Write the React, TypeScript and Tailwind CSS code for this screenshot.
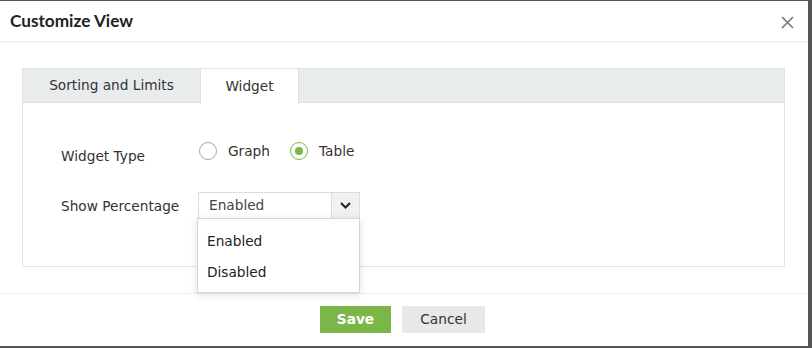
import * as React from 'react';

const body = { fontFamily: '"DejaVu Sans", Verdana, sans-serif' };

const Radio: React.FC<{ checked?: boolean; label: string }> = ({ checked, label }) => (
    <label className="flex items-center gap-[11px]">
        <span className={`w-[18px] h-[18px] rounded-full border-[1.5px] flex items-center justify-center ${checked ? 'border-[#7ab648]' : 'border-[#a8a8a8]'}`}>
            {checked && <span className="w-[8px] h-[8px] rounded-full bg-[#7ab648]" />}
        </span>
        <span className="text-[13.7px] text-[#333]">{label}</span>
    </label>
);

export default function App() {
    return (
        <div className="w-[812px] h-[348px] bg-[#555] overflow-hidden" style={body}>
            <div className="w-[808px] h-[345px] mt-[1px] bg-white flex flex-col">
                {/* header */}
                <div className="h-[42px] flex items-center justify-between pl-[10px] pr-[14px] border-b-2 border-[#f1f1f1]">
                    <h1 className="text-[17.2px] font-bold text-[#222]" style={{ fontFamily: 'Lato, sans-serif' }}>Customize View</h1>
                    <svg width="13" height="13" viewBox="0 0 13 13" className="mt-[2px]">
                        <path d="M1 1L12 12M12 1L1 12" stroke="#777" strokeWidth="1.6" />
                    </svg>
                </div>

                {/* body */}
                <div className="flex-1 pt-[25px] px-[22px]">
                    <div className="w-[763px] h-[199px] border border-[#e2e4e4] flex flex-col">
                        <div className="h-[34px] bg-[#e9ecec] border-b border-[#dfe2e2] flex">
                            <div className="w-[177px] flex items-center justify-center text-[13.7px] text-[#333]">Sorting and Limits</div>
                            <div className="w-[99px] h-[35px] bg-white border-x border-[#dfe2e2] flex items-center justify-center text-[13.7px] text-[#333]">Widget</div>
                        </div>
                        <div className="pl-[38px] pt-[35px] flex flex-col gap-[28px]">
                            <div className="flex items-center h-[26px]">
                                <span className="w-[138px] text-[13.7px] text-[#333] mt-[10px]">Widget Type</span>
                                <div className="flex items-center gap-[20px]">
                                    <Radio label="Graph" />
                                    <Radio checked label="Table" />
                                </div>
                            </div>
                            <div className="flex items-center">
                                <span className="w-[137px] text-[13.7px] text-[#333] mt-[1px]">Show Percentage</span>
                                <div className="relative">
                                    <div className="w-[162px] h-[27px] border border-[#dcdcdc] flex">
                                        <span className="flex-1 pl-[10px] flex items-center text-[13.7px] text-[#444]">Enabled</span>
                                        <span className="w-[28px] bg-[#f1f1f1] border-l border-[#dcdcdc] flex items-center justify-center">
                                            <svg width="11" height="7" viewBox="0 0 11 7">
                                                <path d="M1 1L5.5 5.5L10 1" stroke="#222" strokeWidth="2" fill="none" />
                                            </svg>
                                        </span>
                                    </div>
                                    <div className="absolute left-[-1px] top-[26px] w-[163px] h-[75px] bg-white border border-[#d6d6d6] shadow-[0_2px_8px_rgba(0,0,0,0.12)] pt-[12px] flex flex-col gap-[10px] z-10">
                                        <span className="pl-[9px] text-[13.7px] text-[#222]">Enabled</span>
                                        <span className="pl-[9px] text-[13.7px] text-[#222]">Disabled</span>
                                    </div>
                                </div>
                            </div>
                        </div>
                    </div>
                </div>

                {/* footer */}
                <div className="h-[53px] border-t border-[#eeeeee] flex items-start justify-center gap-[11px] pt-[12px] pr-[3px]">
                    <button className="w-[71px] h-[27px] bg-[#7ab648] text-white text-[13.7px] font-bold">Save</button>
                    <button className="w-[83px] h-[27px] bg-[#e8e8e8] text-[#333] text-[13.7px]">Cancel</button>
                </div>
            </div>
        </div>
    );
}
